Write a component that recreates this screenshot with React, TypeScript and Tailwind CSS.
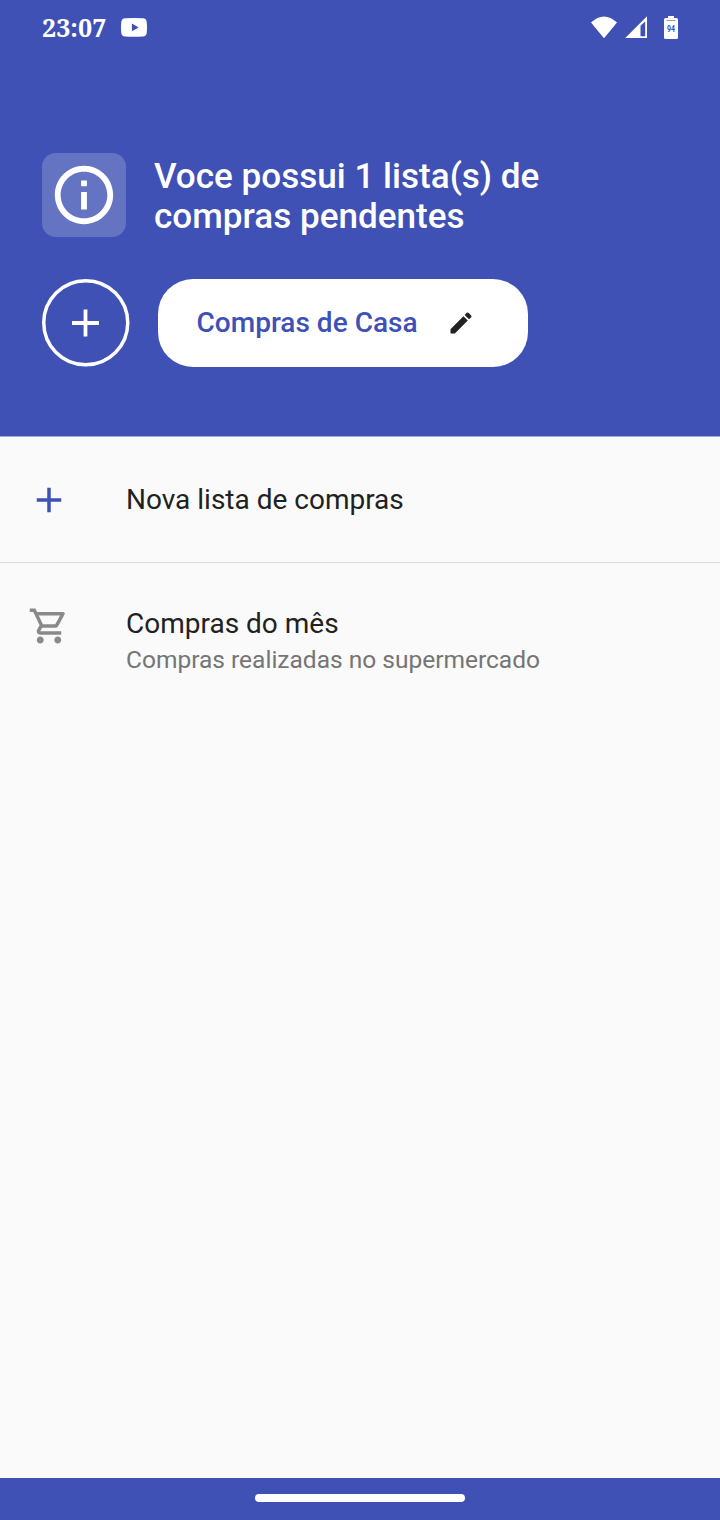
export default function App() {
  return (
    <div className="flex h-[1520px] w-[720px] flex-col bg-[#fafafa] font-['Roboto',sans-serif]">
      <header className="flex h-[437px] flex-col border-b border-[#a1aada] bg-[#3f51b5] text-white">
        <div className="flex h-[55px] items-center justify-between pl-[42px] pr-[42px]">
          <div className="flex items-center">
            <span className="w-[79px] pb-0.5 font-['Noto_Serif','DejaVu_Serif',serif] text-[25.1px] font-bold leading-[30px]">23:07</span>
            <svg className="h-[19px] w-[26px]" viewBox="0 0 26 19" fill="currentColor"><path fillRule="evenodd" d="M4 .3Q13-.1 22 .3Q25.300.6 25.700 4Q26.300 9.500 25.700 15Q25.300 18.200 22 18.500Q13 18.900 4 18.500Q.7 18.200.3 15Q-.3 9.500.3 4Q.7.6 4 .3ZM10.900 5.600V13.200L17.700 9.400Z" /></svg>
          </div>
          <div className="flex items-center">
            <svg className="h-[23px] w-[28px]" viewBox="0 0 28 23" fill="currentColor"><path d="M1 6.500Q14-5.500 27 6.500L14 22.200Z" /></svg>
            <svg className="ml-[7px] h-[23px] w-[23px]" viewBox="0 0 23 23" fill="currentColor"><path fillRule="evenodd" d="M22 .3V22H.2ZM15.500 9.800V20.200H20.200V5.400Z" /></svg>
            <svg className="ml-4 h-6 w-[14px]" viewBox="0 0 14 24" fill="currentColor">
              <path d="M4 0H10V2H12.500Q14 2 14 3.500V21.500Q14 23 12.500 23H1.500Q0 23 0 21.500V3.500Q0 2 1.500 2H4Z" />
              <path d="M2.500 4.500H11.500" stroke="#8f99d3" />
              <text x="7" y="16" textAnchor="middle" fontSize="8.500" textLength="8" lengthAdjust="spacingAndGlyphs" fontWeight="700" fill="#3f51b5">94</text>
            </svg>
          </div>
        </div>
        <div className="mt-[98px] flex h-[84px] items-center gap-7 px-[42px]">
          <div className="flex h-[84px] w-[84px] items-center justify-center rounded-[14px] bg-white/20">
            <svg className="h-[70px] w-[70px]" viewBox="0 0 24 24" fill="currentColor"><path d="M11 7h2v2h-2zm0 4h2v6h-2zm1-9C6.480 2 2 6.480 2 12s4.480 10 10 10 10-4.480 10-10S17.520 2 12 2zm0 18c-4.410 0-8-3.590-8-8s3.590-8 8-8 8 3.590 8 8-3.590 8-8 8z" /></svg>
          </div>
          <h1 className="pt-0.5 text-[35.1px] font-medium leading-10">Voce possui 1 lista(s) de<br />compras pendentes</h1>
        </div>
        <div className="mt-[42px] flex items-start gap-[28.5px] px-[42px]">
          <button className="h-[87.5px] w-[87.5px]">
            <svg className="h-[87.5px] w-[87.5px]" viewBox="0 0 87.5 87.5" fill="none" stroke="currentColor">
              <circle cx="43.750" cy="43.750" r="42" strokeWidth="3.5" />
              <path d="M43.500 30.500V57.500M30 44H57" strokeWidth="3.8" />
            </svg>
          </button>
          <button className="flex h-[87.5px] w-[369.5px] items-center rounded-[35px] bg-white pl-[38.5px] text-[#3f51b5]">
            <span className="text-[28.05px] font-medium">Compras de Casa</span>
            <svg className="ml-[29px] h-7 w-7 text-[#212121]" viewBox="0 0 24 24" fill="currentColor"><path d="M3 17.250V21h3.750L17.810 9.940l-3.750-3.750L3 17.250zM20.710 7.040a1 1 0 0 0 0-1.410l-2.340-2.340a1 1 0 0 0-1.410 0l-1.830 1.830 3.750 3.750 1.830-1.830z" /></svg>
          </button>
        </div>
      </header>
      <main className="flex-1">
        <div className="flex h-[126px] items-center border-b border-[#dcdcdc] pl-7">
          <svg className="h-[42px] w-[42px] text-[#3f51b5]" viewBox="0 0 24 24" fill="currentColor"><path d="M19 13h-6v6h-2v-6H5v-2h6V5h2v6h6v2z" /></svg>
          <span className="ml-14 text-[28px] text-[#212121]">Nova lista de compras</span>
        </div>
        <div className="flex pl-7 pt-[42px]">
          <svg className="h-[42px] w-[42px] text-[#8a8a8a]" viewBox="0 0 24 24" fill="currentColor"><path d="M15.550 13c.75 0 1.410-.41 1.750-1.030l3.580-6.490A.996.996 0 0 0 20.010 4H5.210l-.94-2H1v2h2l3.600 7.590-1.350 2.440C4.520 15.370 5.480 17 7 17h12v-2H7l1.100-2h7.450zM6.160 6h12.150l-2.760 5H8.530L6.160 6zM7 18c-1.100 0-1.990.9-1.990 2S5.900 22 7 22s2-.9 2-2-.9-2-2-2zm10 0c-1.100 0-1.990.9-1.990 2s.89 2 1.990 2 2-.9 2-2-.9-2-2-2z" /></svg>
          <div className="ml-14 flex flex-col pt-px"><span className="text-[28px] leading-9 text-[#212121]">Compras do mês</span><span className="text-[24.500px] leading-9 text-[#757575]">Compras realizadas no supermercado</span></div>
        </div>
      </main>
      <footer className="flex h-[42px] justify-center bg-[#3f51b5] pt-4"><div className="h-2 w-[210px] rounded-full bg-white" /></footer>
    </div>
  );
}
